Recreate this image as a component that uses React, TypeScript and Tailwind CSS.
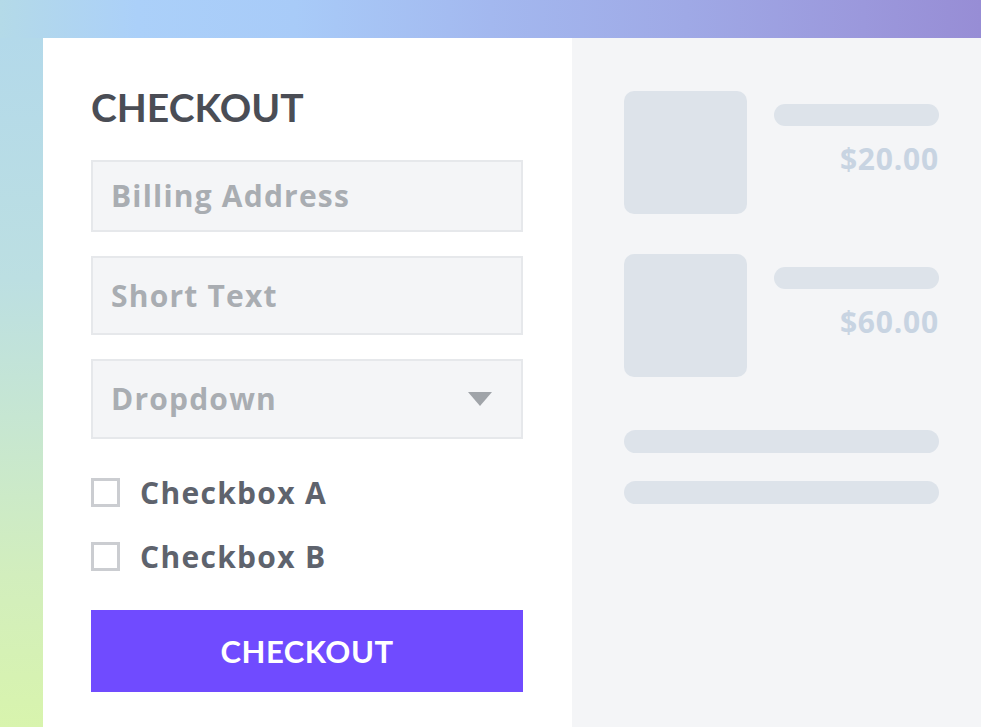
import React from "react";

const sans = { fontFamily: '"Open Sans", "Noto Sans", sans-serif' };

function Field({ label, h, arrow }: { label: string; h: string; arrow?: boolean }) {
  return (
    <div
      className={`flex items-center justify-between border-2 border-[#e6e8eb] bg-[#f4f5f7] pl-[18px] pr-[29px] ${h}`}
    >
      <span className="text-[30px] font-bold leading-none tracking-[1.2px] text-[#a9adb2] font-['Open_Sans',sans-serif]">
        {label}
      </span>
      {arrow && (
        <svg width="24" height="14" viewBox="0 0 24 14">
          <polygon points="0,0 24,0 12,14" fill="#a0a4a9" />
        </svg>
      )}
    </div>
  );
}

function Check({ label }: { label: string }) {
  return (
    <div className="flex h-[29px] items-center gap-[20px]">
      <div className="h-[29px] w-[29px] shrink-0 border-[3px] border-[#cbcdd1] bg-white" />
      <span className="text-[30px] font-bold leading-none tracking-[1.3px] text-[#5e636d] font-['Open_Sans',sans-serif]">
        {label}
      </span>
    </div>
  );
}

function Item({ price }: { price: string }) {
  return (
    <div className="flex gap-[27px]">
      <div className="h-[123px] w-[123px] shrink-0 rounded-[10px] bg-[#dde3ea]" />
      <div className="flex flex-1 flex-col items-end pt-[13px]">
        <div className="h-[22px] w-full rounded-full bg-[#dde3ea]" />
        <span className="mt-[18px] text-[30px] font-bold leading-none tracking-[0.8px] text-[#c8d4e2] font-['Open_Sans',sans-serif]">
          {price}
        </span>
      </div>
    </div>
  );
}

export default function App() {
  return (
    <div className="flex h-[727px] w-[981px] flex-col overflow-hidden" style={sans}>
      <div className="h-[38px] shrink-0 bg-[linear-gradient(to_right,#b4dae8_0%,#abd0f9_14%,#a8cbf8_30%,#a3b8ef_50%,#9fa9e6_70%,#9b98dc_88%,#978dd5_100%)]" />
      <div className="flex flex-1">
        <div className="w-[43px] shrink-0 bg-[linear-gradient(to_bottom,#b3d9ea_0%,#bcdfe2_35%,#c6e6d2_55%,#d2eebd_78%,#d8f4ad_100%)]" />
        <div className="flex flex-1">
          <div className="flex w-[529px] shrink-0 flex-col bg-white pl-[48px] pr-[49px] pt-[50px]">
            <h1 className="text-[39px] font-bold leading-[39px] text-[#4a4d55] font-['Lato',sans-serif]">
              CHECKOUT
            </h1>
            <div className="mt-[33px] flex flex-col gap-[24px]">
              <Field label="Billing Address" h="h-[72px]" />
              <Field label="Short Text" h="h-[79px]" />
              <Field label="Dropdown" h="h-[80px]" arrow />
            </div>
            <div className="mt-[39px] flex flex-col gap-[35px]">
              <Check label="Checkbox A" />
              <Check label="Checkbox B" />
            </div>
            <button className="mt-[39px] flex h-[82px] w-full items-center justify-center bg-[#704bff] text-[31px] font-bold tracking-[0.5px] text-white font-['Lato',sans-serif]">
              CHECKOUT
            </button>
          </div>
          <div className="flex flex-1 flex-col bg-[#f4f5f7] pl-[52px] pr-[42px] pt-[53px]">
            <div className="flex flex-col gap-[40px]">
              <Item price="$20.00" />
              <Item price="$60.00" />
            </div>
            <div className="mt-[53px] flex flex-col gap-[28px]">
              <div className="h-[23px] rounded-full bg-[#dde3ea]" />
              <div className="h-[23px] rounded-full bg-[#dde3ea]" />
            </div>
          </div>
        </div>
      </div>
    </div>
  );
}
